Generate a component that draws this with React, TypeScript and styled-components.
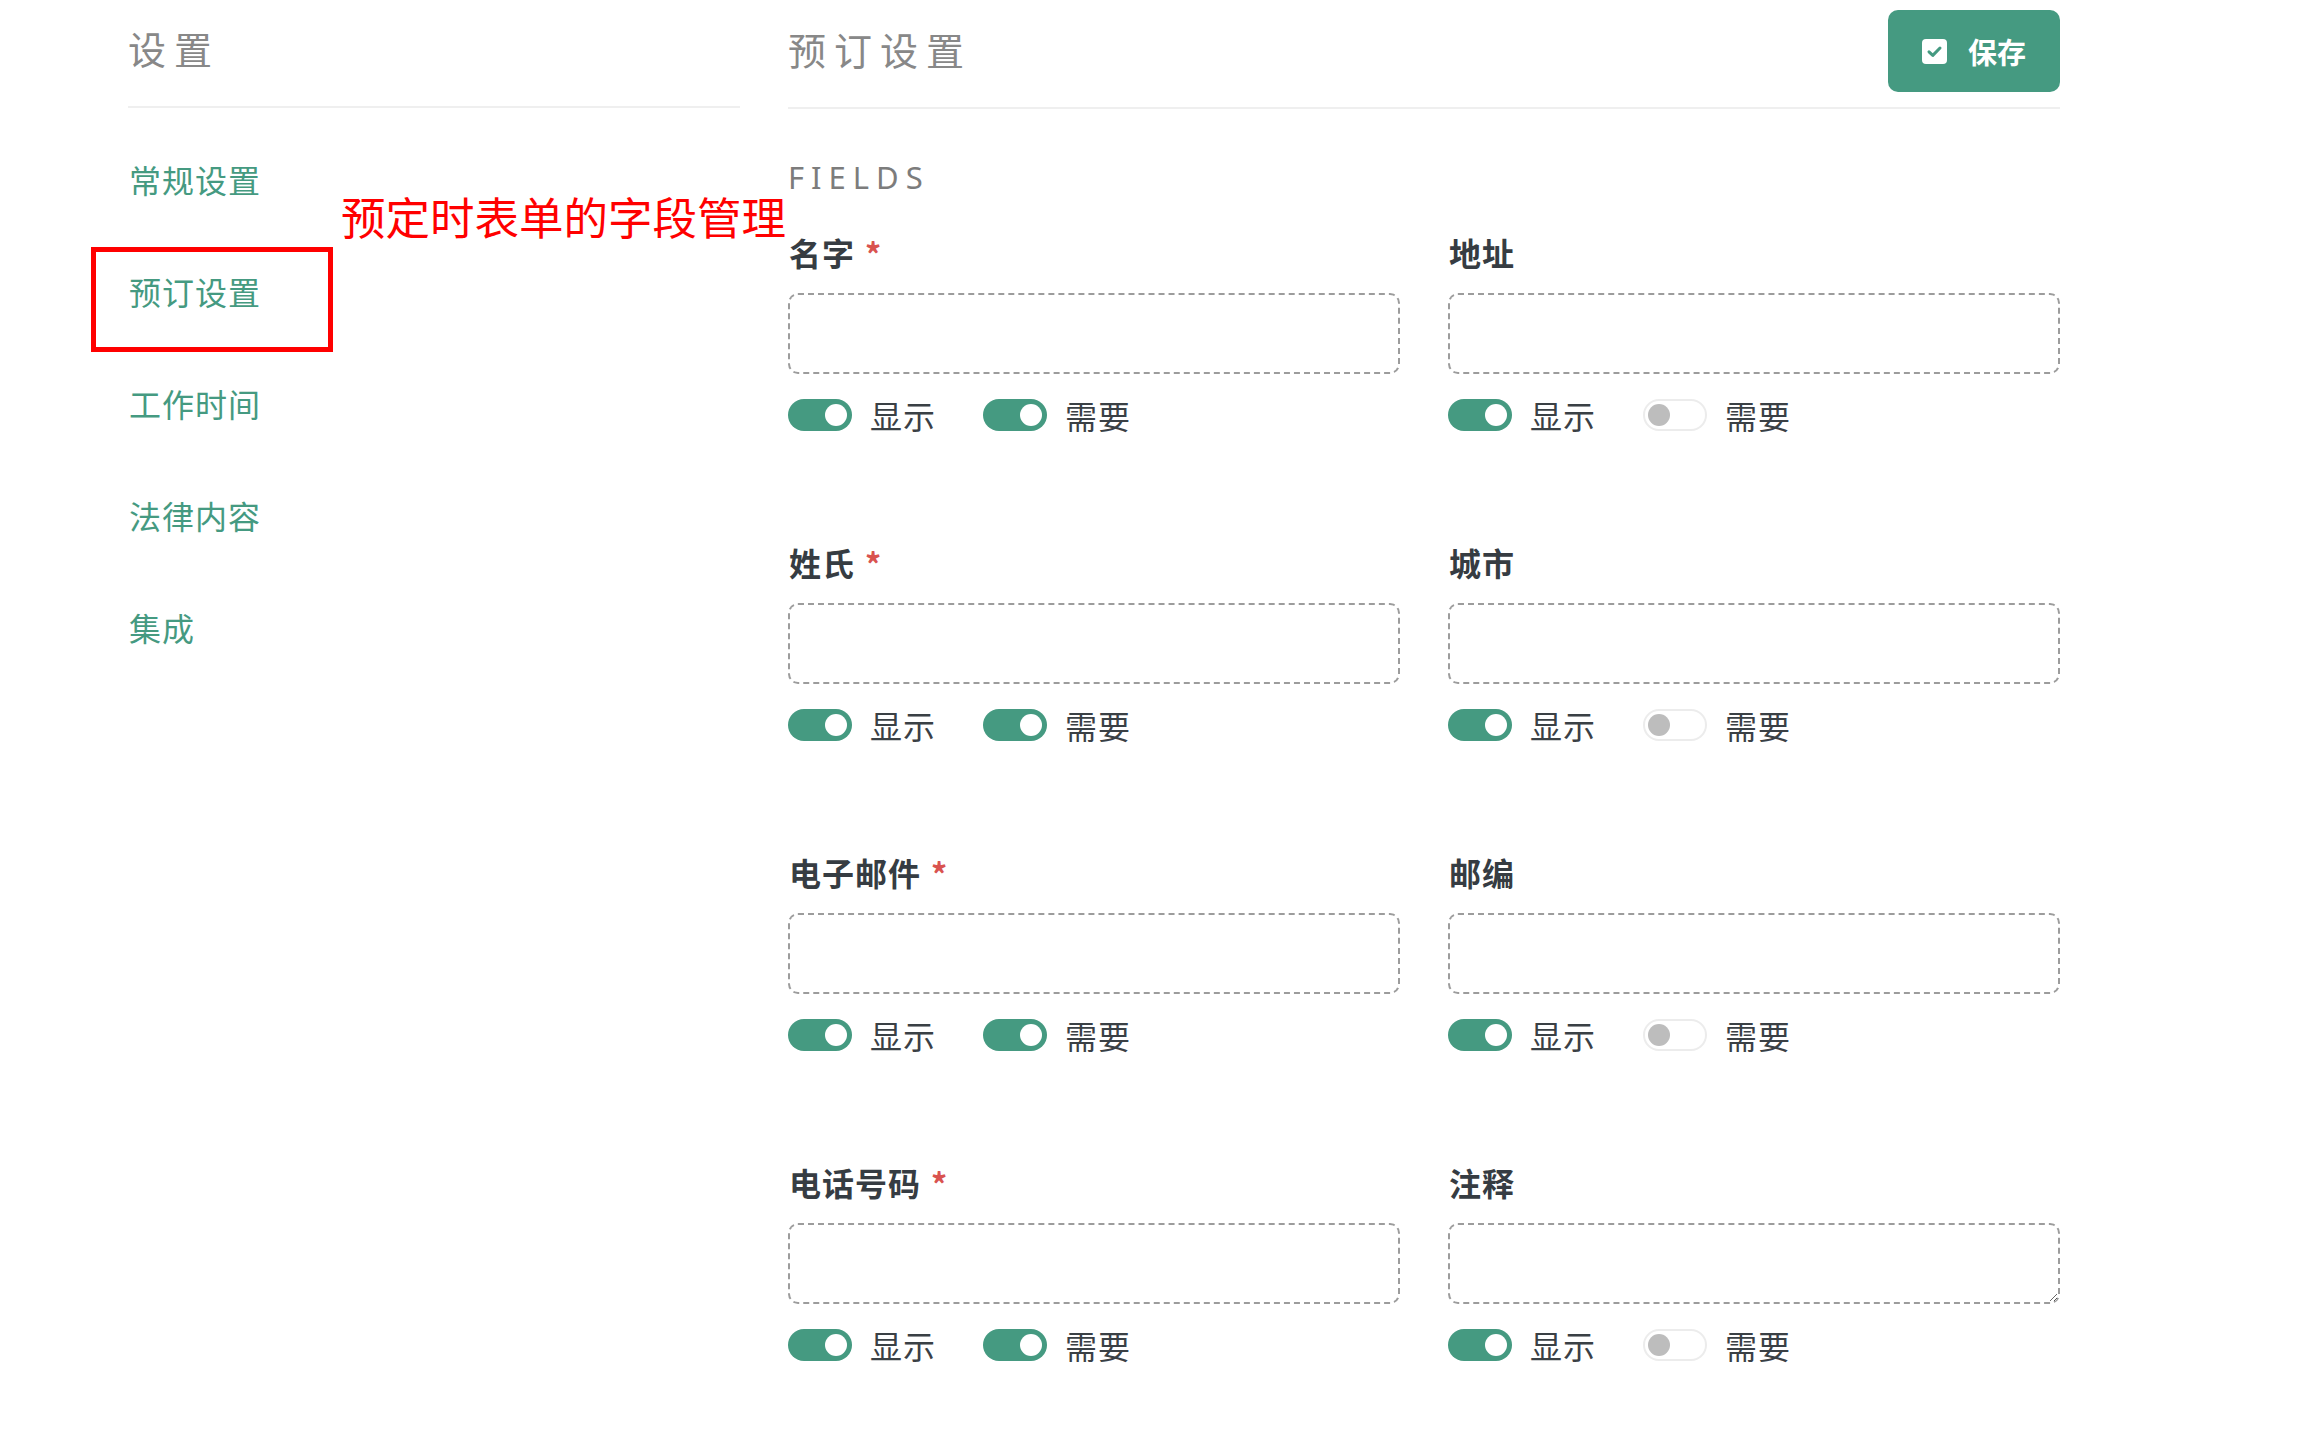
import React from "react";
import styled, { createGlobalStyle } from "styled-components";

const GREEN = "#459a81";
const CJK = `"Noto Sans CJK SC", "Noto Sans", sans-serif`;

const GlobalStyle = createGlobalStyle`
  html, body {
    margin: 0;
    padding: 0;
    background: #ffffff;
  }
  body {
    font-family: ${CJK};
    color: #3a4045;
  }
  * { box-sizing: border-box; }
`;

const Page = styled.div`
  position: relative;
  display: flex;
  gap: 48px;
  padding-left: 128px;
  min-height: 1456px;
`;

const Sidebar = styled.aside`
  width: 612px;
  flex: none;
`;

const SideTitle = styled.h1`
  margin: 0;
  padding: 25px 0 35px;
  font-size: 38px;
  line-height: 46px;
  font-weight: 400;
  letter-spacing: 8px;
  color: #888888;
  border-bottom: 2px solid #efefef;
`;

const NavList = styled.nav`
  display: flex;
  flex-direction: column;
  padding-top: 15px;
`;

const NavItem = styled.a`
  position: relative;
  display: block;
  padding: 36px 0 36px 1px;
  font-size: 32px;
  line-height: 40px;
  letter-spacing: 1px;
  color: ${GREEN};
  text-decoration: none;
  cursor: pointer;
`;

const Highlight = styled.span`
  position: absolute;
  left: -37px;
  top: 12px;
  width: 242px;
  height: 105px;
  border: 5px solid #ff0000;
  pointer-events: none;
`;

const Annotation = styled.div`
  position: absolute;
  left: 341px;
  top: 188px;
  font-size: 44.5px;
  line-height: 56px;
  color: #ff0000;
  white-space: nowrap;
  pointer-events: none;
`;

const Main = styled.main`
  width: 1272px;
  flex: none;
`;

const MainHeader = styled.header`
  display: flex;
  align-items: center;
  justify-content: space-between;
  padding: 10px 0 15px;
  border-bottom: 2px solid #efefef;
`;

const MainTitle = styled.h2`
  margin: 0 0 4px;
  font-size: 38px;
  line-height: 46px;
  font-weight: 400;
  letter-spacing: 8px;
  color: #888888;
`;

const SaveButton = styled.button`
  display: flex;
  align-items: center;
  gap: 21px;
  height: 82px;
  width: 172px;
  padding: 0 0 0 34px;
  border: none;
  border-radius: 10px;
  background: ${GREEN};
  color: #ffffff;
  font-family: ${CJK};
  font-size: 29px;
  font-weight: 700;
  letter-spacing: 0;
  cursor: pointer;
`;

const SectionTitle = styled.div`
  margin-top: 48px;
  font-family: "Noto Sans", sans-serif;
  font-size: 31px;
  line-height: 40px;
  letter-spacing: 7px;
  color: #7c7c7c;
  font-weight: 400;
`;

const FieldGrid = styled.div`
  display: grid;
  grid-template-columns: 1fr 1fr;
  column-gap: 48px;
  row-gap: 107px;
  margin-top: 35px;
`;

const Field = styled.div`
  display: flex;
  flex-direction: column;
`;

const Label = styled.label`
  display: flex;
  align-items: flex-start;
  font-size: 32px;
  line-height: 40px;
  font-weight: 700;
  letter-spacing: 1px;
  color: #363c42;
  margin-left: 1px;
`;

const Required = styled.span`
  margin-left: 10px;
  margin-top: 6px;
  font-size: 32px;
  line-height: 30px;
  font-weight: 700;
  color: #d9534f;
`;

const inputBase = `
  display: block;
  width: 100%;
  height: 81px;
  margin-top: 21px;
  border: 2px dashed #9c9c9c;
  border-radius: 10px;
  background: #ffffff;
  font-family: ${CJK};
  font-size: 28px;
  padding: 10px 16px;
  outline: none;
`;

const TextInput = styled.input`
  ${inputBase}
`;

const TextArea = styled.textarea`
  ${inputBase}
  resize: vertical;
`;

const ToggleRow = styled.div`
  display: flex;
  align-items: center;
  margin-top: 21px;
  height: 40px;
`;

const ToggleItem = styled.div`
  display: flex;
  align-items: center;
  gap: 18px;
  width: 195px;
`;

const Track = styled.span<{ $on: boolean }>`
  position: relative;
  width: 64px;
  height: 32px;
  border-radius: 16px;
  background: ${(p) => (p.$on ? GREEN : "#ffffff")};
  border: ${(p) => (p.$on ? "none" : "2px solid #ececec")};
  flex: none;
`;

const Knob = styled.span<{ $on: boolean }>`
  position: absolute;
  top: ${(p) => (p.$on ? 5 : 3)}px;
  ${(p) => (p.$on ? "right: 5px;" : "left: 3px;")}
  width: 22px;
  height: 22px;
  border-radius: 50%;
  background: ${(p) => (p.$on ? "#ffffff" : "#bdbdbd")};
`;

const ToggleText = styled.span`
  font-size: 32px;
  line-height: 40px;
  letter-spacing: 1px;
  color: #3a4045;
`;

const Toggle: React.FC<{ on: boolean; text: string }> = ({ on, text }) => (
  <ToggleItem>
    <Track $on={on}>
      <Knob $on={on} />
    </Track>
    <ToggleText>{text}</ToggleText>
  </ToggleItem>
);

const CheckIcon = () => (
  <svg width="25" height="25" viewBox="0 0 25 25">
    <rect x="0" y="0" width="25" height="25" rx="4" fill="#ffffff" />
    <path d="M7 12.8 L10.8 16.4 L18 9" fill="none" stroke={GREEN} strokeWidth="3" strokeLinecap="round" strokeLinejoin="round" />
  </svg>
);

type FieldDef = { label: string; required: boolean; textarea?: boolean };

const fields: FieldDef[] = [
  { label: "名字", required: true },
  { label: "地址", required: false },
  { label: "姓氏", required: true },
  { label: "城市", required: false },
  { label: "电子邮件", required: true },
  { label: "邮编", required: false },
  { label: "电话号码", required: true },
  { label: "注释", required: false, textarea: true },
];

const navItems = ["常规设置", "预订设置", "工作时间", "法律内容", "集成"];

export default function App() {
  return (
    <>
      <GlobalStyle />
      <Page>
        <Sidebar>
          <SideTitle>设置</SideTitle>
          <NavList>
            {navItems.map((n) => (
              <NavItem key={n}>
                {n}
                {n === "预订设置" && <Highlight />}
              </NavItem>
            ))}
          </NavList>
        </Sidebar>
        <Main>
          <MainHeader>
            <MainTitle>预订设置</MainTitle>
            <SaveButton>
              <CheckIcon />
              <span>保存</span>
            </SaveButton>
          </MainHeader>
          <SectionTitle>FIELDS</SectionTitle>
          <FieldGrid>
            {fields.map((f) => (
              <Field key={f.label}>
                <Label>
                  {f.label}
                  {f.required && <Required>*</Required>}
                </Label>
                {f.textarea ? <TextArea /> : <TextInput type="text" />}
                <ToggleRow>
                  <Toggle on={true} text="显示" />
                  <Toggle on={f.required} text="需要" />
                </ToggleRow>
              </Field>
            ))}
          </FieldGrid>
        </Main>
        <Annotation>预定时表单的字段管理</Annotation>
      </Page>
    </>
  );
}
